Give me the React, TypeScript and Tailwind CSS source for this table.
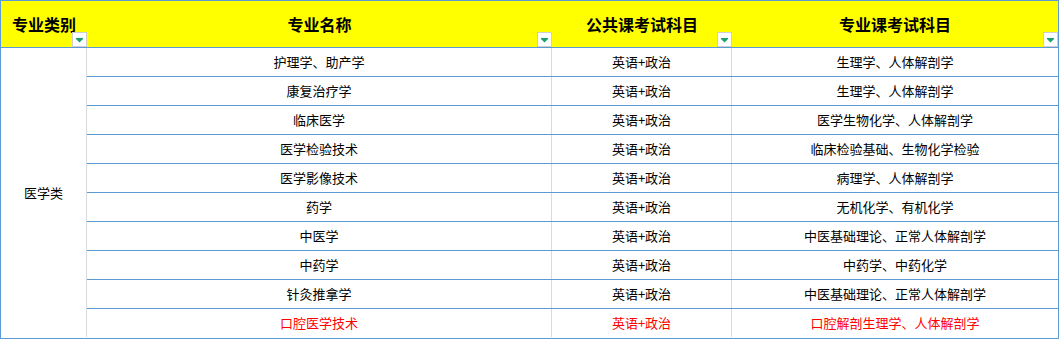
const rows: { name: string; pub: string; pro: string; red?: boolean }[] = [
  { name: "护理学、助产学", pub: "英语+政治", pro: "生理学、人体解剖学" },
  { name: "康复治疗学", pub: "英语+政治", pro: "生理学、人体解剖学" },
  { name: "临床医学", pub: "英语+政治", pro: "医学生物化学、人体解剖学" },
  { name: "医学检验技术", pub: "英语+政治", pro: "临床检验基础、生物化学检验" },
  { name: "医学影像技术", pub: "英语+政治", pro: "病理学、人体解剖学" },
  { name: "药学", pub: "英语+政治", pro: "无机化学、有机化学" },
  { name: "中医学", pub: "英语+政治", pro: "中医基础理论、正常人体解剖学" },
  { name: "中药学", pub: "英语+政治", pro: "中药学、中药化学" },
  { name: "针灸推拿学", pub: "英语+政治", pro: "中医基础理论、正常人体解剖学" },
  { name: "口腔医学技术", pub: "英语+政治", pro: "口腔解剖生理学、人体解剖学", red: true },
];

function FilterButton() {
  return (
    <div className="absolute right-0 bottom-0 w-[15px] h-[15px] bg-white border border-[#cfcfcf]">
      <svg width="13" height="13" viewBox="0 0 13 13" className="block">
        <rect x="3" y="5" width="7" height="1" fill="#1aa36a" />
        <polygon points="3,6 10,6 6.5,9.5" fill="#1aa36a" />
      </svg>
    </div>
  );
}

function HeaderCell({ label, width }: { label: string; width: string }) {
  return (
    <div className={`relative ${width} h-full flex items-center justify-center`}>
      <span className="text-[16px] font-bold text-black">{label}</span>
      <FilterButton />
    </div>
  );
}

export default function App() {
  return (
    <div
      className="w-[1059px] h-[339px] bg-white border border-[#5b9bd5]"
      style={{ fontFamily: '"Noto Sans CJK SC", "Noto Sans", sans-serif' }}
    >
      <div className="flex h-[47px] bg-[#ffff00] border-b border-[#5b9bd5]">
        <HeaderCell label="专业类别" width="w-[86px]" />
        <HeaderCell label="专业名称" width="w-[465px]" />
        <HeaderCell label="公共课考试科目" width="w-[180px]" />
        <HeaderCell label="专业课考试科目" width="w-[326px]" />
      </div>
      <div className="flex">
        <div className="w-[86px] border-r border-[#dadada] flex items-center justify-center text-[13px] text-black">
          医学类
        </div>
        <div className="flex-1 flex flex-col">
          {rows.map((r, i) => (
            <div
              key={r.name}
              className={`flex h-[28px] text-[13px] ${r.red ? "text-[#ff0000]" : "text-black"} ${
                i < rows.length - 1 ? "box-content border-b border-[#5b9bd5]" : ""
              }`}
            >
              <div className="w-[465px] border-r border-[#dadada] flex items-center justify-center">
                {r.name}
              </div>
              <div className="w-[180px] border-r border-[#dadada] flex items-center justify-center">
                {r.pub}
              </div>
              <div className="flex-1 flex items-center justify-center">{r.pro}</div>
            </div>
          ))}
        </div>
      </div>
    </div>
  );
}
